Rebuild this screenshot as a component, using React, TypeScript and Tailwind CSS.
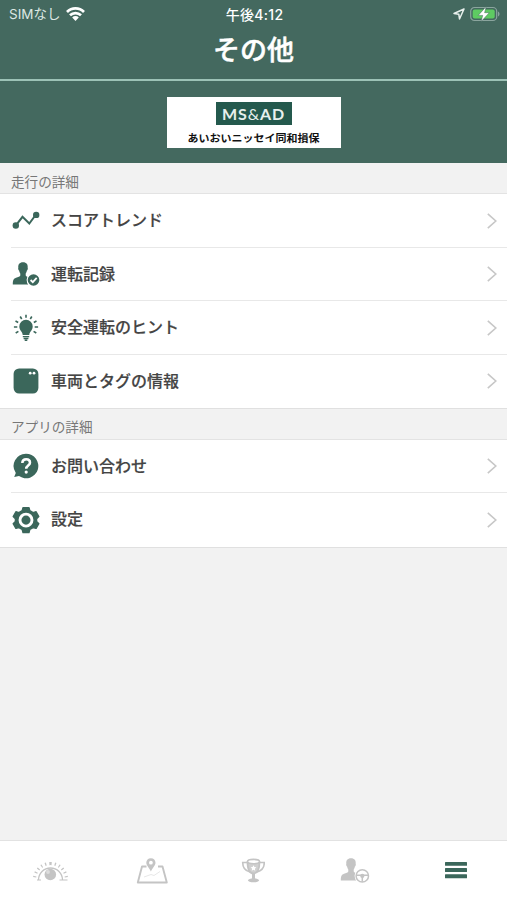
import type { ReactNode } from 'react';

const GREEN = '#3b675b';
const GRAY = '#c4c4c4';

const Person = () => (
  <path d="M11 .8c3.600 0 5 2.400 4.700 5.400.5 1.300-.3 2.600-.9 3-.2 1.300-.6 2.100-1.100 2.800v2c.3 1 2.600 1.500 4.300 2.300-2.500 1.500-3.300 4.100-1.800 6.700H.8c0-4.300.7-5.700 3.200-6.700 2.100-.8 4.100-1.300 4.300-2.300v-2c-.5-.7-.9-1.500-1.100-2.800-.6-.4-1.400-1.700-.9-3C6 3.200 7.400.8 11 .8Z" />
);

const TrendIcon = () => (
  <svg className="h-7 w-7" viewBox="0 0 28 28" fill={GREEN}>
    <path d="M3.700 18.700 10.500 9.800l6.800 6.700L24 7.500" fill="none" stroke={GREEN} strokeWidth="2" />
    <circle cx="3.800" cy="18.500" r="3.200" />
    <circle cx="24.200" cy="7.900" r="3.200" />
  </svg>
);

const RecordIcon = () => (
  <svg className="h-7 w-7" viewBox="0 0 28 28" fill={GREEN}>
    <g transform="translate(0 1.500)"><Person /></g>
    <circle cx="21.500" cy="20" r="6.900" fill="white" />
    <circle cx="21.500" cy="20" r="5.800" />
    <path d="m18.600 20 2.200 2.200 3.900-4.400" fill="none" stroke="white" strokeWidth="1.800" />
  </svg>
);

const BulbIcon = () => (
  <svg className="h-7 w-7" viewBox="0 0 28 28" fill={GREEN}>
    <path d="M14 5.700a6.700 6.700 0 0 1 6.700 6.700c0 3.900-3.200 5-3.400 8.600h-6.600c-.2-3.600-3.400-4.700-3.400-8.600A6.700 6.700 0 0 1 14 5.700Z" />
    <path d="M10.800 22.600h6.400M11.600 24.500h4.800M12.700 26.300h2.600" stroke={GREEN} strokeWidth="1.400" />
    <path d="M14 .8v3M8.200 2.500l1.500 2.500M19.800 2.500l-1.500 2.500M3.500 7l2.700 1.500M24.500 7l-2.700 1.500M1.900 13h3.400M26.100 13h-3.400M3.700 19l2.700-1.600M24.300 19l-2.700-1.600" stroke={GREEN} strokeWidth="1.600" />
  </svg>
);

const TagIcon = () => (
  <svg className="h-7 w-7" viewBox="0 0 28 28">
    <rect x="1.600" y="1.500" width="24.800" height="25" rx="5.500" fill={GREEN} />
    <circle cx="18.200" cy="6.200" r="1.400" fill="white" />
    <circle cx="22" cy="6.200" r="1.400" fill="white" />
  </svg>
);

const HelpIcon = () => (
  <svg className="h-7 w-7" viewBox="0 0 28 28">
    <path d="M14 1.700a12.300 12.300 0 1 1-7 22.400L2.200 25l1.600-4A12.300 12.300 0 0 1 14 1.700Z" fill={GREEN} />
    <path d="M10.300 11c.1-2.400 1.600-3.700 3.900-3.700s3.800 1.300 3.800 3.400c0 2.800-3.800 2.800-3.800 6" fill="none" stroke="white" strokeWidth="2.500" />
    <circle cx="14.200" cy="20.100" r="1.600" fill="white" />
  </svg>
);

const GearIcon = () => (
  <svg className="h-7 w-7" viewBox="0 0 28 28">
    <path d="M11 1.700h6l.8 3 3.300 1.900 3-.8 2.700 4.700-2.200 2.200v2.800l2.200 2.200-2.700 4.700-3-.8-3.300 1.900-.8 3h-6l-.8-3-3.300-1.900-3 .8-2.700-4.700 2.200-2.200v-2.800l-2.200-2.200 2.700-4.700 3 .8 3.300-1.900.8-3Z" fill={GREEN} stroke={GREEN} strokeWidth="1.400" strokeLinejoin="round" />
    <circle cx="14" cy="14.100" r="6" fill={GREEN} stroke="white" strokeWidth="2.900" />
  </svg>
);

const Row = ({ icon, label, last = false }: { icon: ReactNode; label: string; last?: boolean }) => (
  <li className="relative flex h-[53.500px] items-center pl-3 pr-[9px]">
    {icon}
    <span className="ml-[11px] flex-1 pt-px text-[16px] font-medium leading-6 text-[#444] [-webkit-text-stroke:0.200px_#444]">{label}</span>
    <svg className="h-[18px] w-[12px]" viewBox="0 0 12 18" fill="none" stroke="#c7c7c7" strokeWidth="1.600">
      <path d="m1.800 1.800 8 7.200-8 7.200" />
    </svg>
    {!last && <div className="absolute bottom-0 left-[11px] right-0 h-px bg-[#e8e8e8]" />}
  </li>
);

const Section = ({ title, children }: { title: string; children: ReactNode }) => (
  <section>
    <h2 className="flex h-[31px] items-center border-b border-[#e3e3e3] bg-[#f2f2f2] pl-[11px] pt-[9px] text-[13.600px] leading-5 text-[#777]">{title}</h2>
    <ul className="bg-white">{children}</ul>
  </section>
);

const StatusBar = () => (
  <div className="grid h-7 grid-cols-3 items-center pl-[9px] pr-[7px] font-['Inter','Noto_Sans_CJK_JP',sans-serif] text-white">
    <div className="flex items-center gap-[6px] text-[13.500px] text-[#dce7e3]">
      <span className="whitespace-nowrap">SIMなし</span>
      <svg className="h-[14px] w-[19px]" viewBox="0 0 19 14" fill="none" stroke="white" strokeWidth="2.700">
        <path d="M1 5a12 12 0 0 1 17 0M4 8.300a7.900 7.900 0 0 1 11 0" />
        <path d="M6.200 10.400a4.600 4.600 0 0 1 6.600 0L9.500 13.900Z" fill="white" stroke="none" />
      </svg>
    </div>
    <span className="whitespace-nowrap text-center text-[14px] font-medium tracking-[0.300px]">午後4:12</span>
    <div className="flex items-center justify-end gap-[5px]">
      <svg className="h-3 w-3" viewBox="0 0 12 12" fill="none" stroke="#e8f0ed" strokeWidth="1.500" strokeLinejoin="round">
        <path d="M11 1 1 5.500l4.800.7.700 4.800Z" />
      </svg>
      <svg className="h-4 w-[30px]" viewBox="0 0 30 16">
        <rect x=".7" y="1.500" width="26" height="13" rx="3.800" fill="none" stroke="#8ba59e" strokeWidth="1.200" />
        <rect x="2.700" y="3.500" width="22" height="9" rx="2" fill="#5ecb62" />
        <path d="M28 5.500v5c2-.7 2-4.300 0-5Z" fill="#8ba59e" />
        <path d="m16.200.5-8 8.900h4.500l-1.600 6.200 8.200-8.900h-4.700Z" fill="white" stroke="#44695f" strokeWidth=".5" />
      </svg>
    </div>
  </div>
);

const RoadIcon = () => (
  <svg className="h-7 w-9" viewBox="0 0 36 28" fill="none" stroke={GRAY}>
    <path d="M5.500 23a11.500 11.500 0 0 1 24 0" strokeWidth="1.300" />
    <path d="M4 23h4M26.500 23h8" strokeWidth="1.200" />
    <path d="M17.500 6.500a16 16 0 0 1 16 15.500M17.500 6.500a16 16 0 0 0-16 15.500" strokeWidth="3.200" strokeDasharray="1.200 3.100" />
    <circle cx="17.300" cy="17.500" r="5.800" fill={GRAY} stroke="none" />
    <circle cx="15" cy="15" r="1.900" fill="#ddd" stroke="none" />
  </svg>
);

const MapIcon = () => (
  <svg className="h-7 w-8" viewBox="0 0 32 28" fill="none" stroke={GRAY} strokeLinejoin="round">
    <path d="M10.500 9.500H6L1.800 25.500h29L26.500 9.500h-4.500" strokeWidth="1.900" />
    <path d="m8 20 7-2.500 3 1 6-4" stroke="#e8e8e8" />
    <path d="M14.900 1.300c2.800 0 4.600 2 4.600 4.400 0 3-3.100 5-4.600 8.800-1.500-3.800-4.600-5.800-4.600-8.800 0-2.400 1.800-4.400 4.600-4.400Z" fill={GRAY} stroke="none" />
    <circle cx="14.900" cy="5.700" r="1.900" fill="white" stroke="none" />
  </svg>
);

const TrophyIcon = () => (
  <svg className="h-7 w-6" viewBox="0 0 24 28" fill="none" stroke={GRAY}>
    <path d="M6.500 4.500c0 8 2 12 6 12s6-4 6-12" fill="#d0d0d0" strokeWidth="1.800" />
    <ellipse cx="12.500" cy="4.600" rx="6" ry="2.200" fill="white" strokeWidth="1.600" />
    <path d="M6.500 5.500H1.700c0 5 2.800 8.500 7.300 9.500M18.500 5.500h4.800c0 5-2.800 8.500-7.300 9.500" strokeWidth="1.600" />
    <path d="m12.500 8.200.9 1.900 2 .2-1.500 1.400.4 2-1.800-1-1.800 1 .4-2-1.500-1.400 2-.2Z" fill="white" stroke="none" />
    <path d="M12.500 16v6.500" strokeWidth="3" />
    <ellipse cx="12.500" cy="23.300" rx="5.600" ry="2" fill={GRAY} stroke="none" />
  </svg>
);

const DriverIcon = () => (
  <svg className="h-7 w-[30px]" viewBox="0 0 30 28" fill={GRAY}>
    <g transform="translate(0 .500)"><Person /></g>
    <circle cx="22.300" cy="18.900" r="7.700" fill="white" />
    <g fill="none" stroke={GRAY} strokeWidth="1.500">
      <circle cx="22.300" cy="18.900" r="6.200" />
      <path d="M16.300 18.300h12M22.300 19v5.800" />
    </g>
    <circle cx="22.300" cy="18.900" r="2.100" />
  </svg>
);

const MenuIcon = () => (
  <svg className="h-7 w-6" viewBox="0 0 24 28" fill={GREEN}>
    <rect x="1" y="4.900" width="22" height="3.900" rx=".5" />
    <rect x="1" y="11.100" width="22" height="3.900" rx=".5" />
    <rect x="1" y="17.300" width="22" height="3.900" rx=".5" />
  </svg>
);

export default function App() {
  return (
    <div className="flex h-[900px] w-full flex-col overflow-hidden bg-[#f2f2f2] font-['Liberation_Sans','Noto_Sans_CJK_JP',sans-serif]">
      <header className="h-[81px] border-b-2 border-[#9cc2b6] bg-[#44695f]">
        <StatusBar />
        <h1 className="pt-[2px] text-center text-[27px] font-medium leading-[43px] text-white [-webkit-text-stroke:0.500px_white]">その他</h1>
      </header>
      <div className="flex h-[82px] justify-center bg-[#44695f] pt-4">
        <div className="flex h-[51px] w-[174px] flex-col items-center bg-white pt-[5px]">
          <div className="flex h-[23px] w-[76px] items-center justify-center bg-[#24594d] font-['Lato',sans-serif] text-[16px] font-bold tracking-[0.900px] text-[#e7f0ed]">
            MS<span className="font-normal">&amp;</span>AD
          </div>
          <p className="mt-[5px] origin-center scale-y-90 whitespace-nowrap text-[11px] font-bold leading-4 text-[#111]">あいおいニッセイ同和損保</p>
        </div>
      </div>
      <main className="flex-1">
        <Section title="走行の詳細">
          <Row icon={<TrendIcon />} label="スコアトレンド" />
          <Row icon={<RecordIcon />} label="運転記録" />
          <Row icon={<BulbIcon />} label="安全運転のヒント" />
          <Row icon={<TagIcon />} label="車両とタグの情報" last />
        </Section>
        <div className="-mt-[0.500px] border-y border-[#e0e0e0]">
          <Section title="アプリの詳細">
            <Row icon={<HelpIcon />} label="お問い合わせ" />
            <Row icon={<GearIcon />} label="設定" last />
          </Section>
        </div>
      </main>
      <nav className="grid h-[60px] grid-cols-5 justify-items-center border-t border-[#e2e2e2] bg-white pt-4">
        <RoadIcon />
        <MapIcon />
        <TrophyIcon />
        <DriverIcon />
        <MenuIcon />
      </nav>
    </div>
  );
}
